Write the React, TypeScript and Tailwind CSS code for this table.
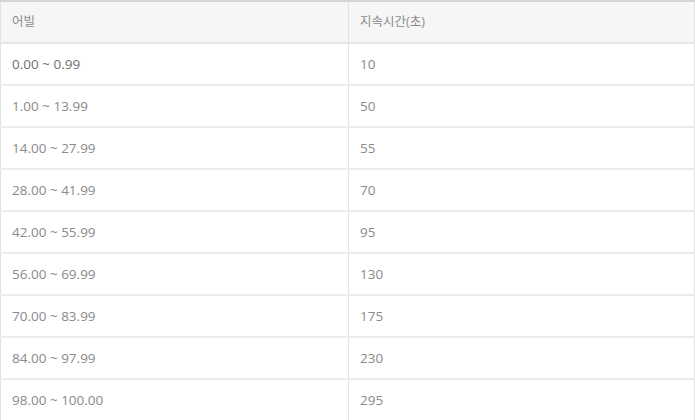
const rows: [string, string][] = [
  ['0.00 ~ 0.99', '10'],
  ['1.00 ~ 13.99', '50'],
  ['14.00 ~ 27.99', '55'],
  ['28.00 ~ 41.99', '70'],
  ['42.00 ~ 55.99', '95'],
  ['56.00 ~ 69.99', '130'],
  ['70.00 ~ 83.99', '175'],
  ['84.00 ~ 97.99', '230'],
  ['98.00 ~ 100.00', '295'],
]

export default function App() {
  return (
    <div
      className="w-[695px] bg-white"
      style={{ fontFamily: '"Open Sans", "Noto Sans CJK KR", sans-serif' }}
    >
      <table className="w-full border-collapse border-t-2 border-t-[#d4d4d4] border-x border-x-[#e2e2e2] text-[13.5px] text-[#8a8a8a]">
        <thead>
          <tr className="h-[42px] bg-[#f6f6f6] border-b-2 border-b-[#e6e6e6] text-[12.5px]">
            <th className="w-[348px] pl-[11px] text-left font-normal border-r border-r-[#e2e2e2]">어빌</th>
            <th className="pl-[11px] text-left font-normal">지속시간(초)</th>
          </tr>
        </thead>
        <tbody>
          {rows.map(([range, secs], i) => (
            <tr key={range} className="h-[42px] border-b-2 border-b-[#ececec]">
              <td
                className={`pl-[11px] border-r border-r-[#e2e2e2] ${i === 0 ? 'text-[#707070]' : ''}`}
              >
                {range}
              </td>
              <td className="pl-[11px]">{secs}</td>
            </tr>
          ))}
        </tbody>
      </table>
    </div>
  )
}
